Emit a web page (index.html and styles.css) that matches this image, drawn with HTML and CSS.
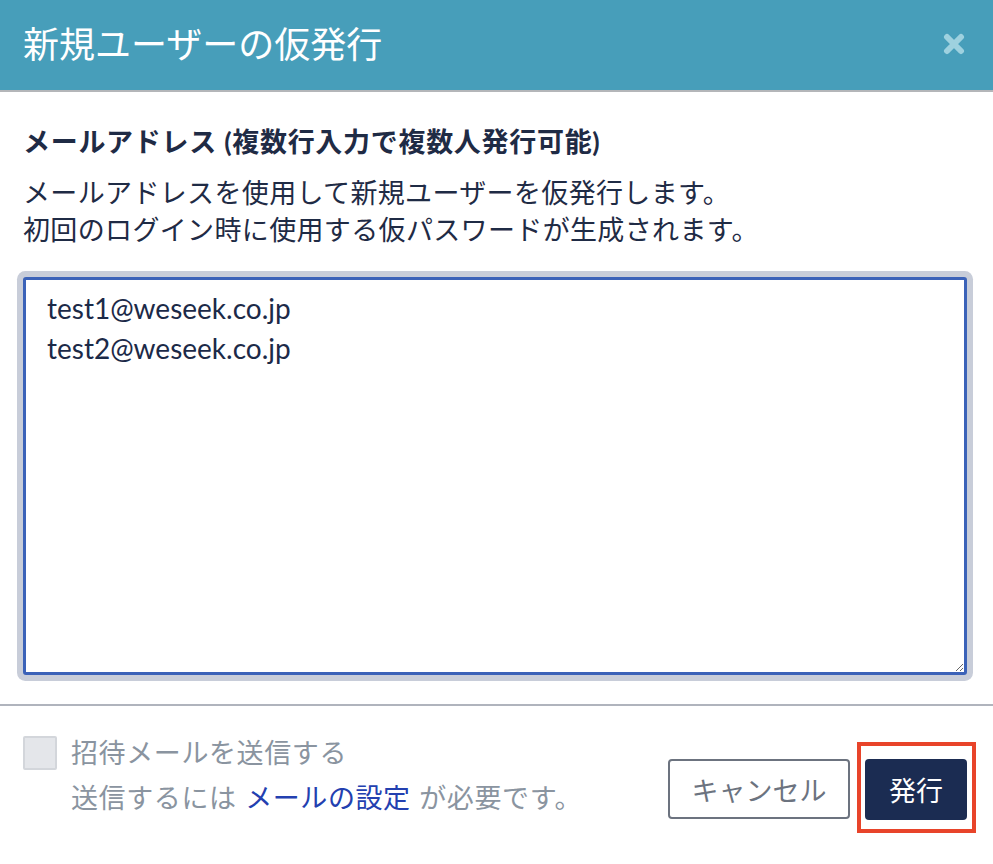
FILE: index.html
```html
<!DOCTYPE html>
<html lang="ja">
<head>
<meta charset="utf-8">
<link rel="stylesheet" href="styles.css">
</head>
<body>
<div class="modal">
  <header class="modal-header">
    <h1 class="modal-title">新規ユーザーの仮発行</h1>
    <button class="close" aria-label="close">
      <svg width="22" height="22" viewBox="0 0 22 22"><path d="M4 4 L18 18 M18 4 L4 18" stroke="#9ed1df" stroke-width="6" stroke-linecap="round"/></svg>
    </button>
  </header>
  <section class="modal-body">
    <label class="field-label">メールアドレス (複数行入力で複数人発行可能)</label>
    <p class="field-desc">メールアドレスを使用して新規ユーザーを仮発行します。<br>初回のログイン時に使用する仮パスワードが生成されます。</p>
    <textarea class="emails">test1@weseek.co.jp
test2@weseek.co.jp</textarea>
  </section>
  <footer class="modal-footer">
    <div class="send-mail">
      <div class="check-row">
        <span class="checkbox"></span>
        <span class="check-label">招待メールを送信する</span>
      </div>
      <p class="help">送信するには <a class="link" href="#">メールの設定</a> が必要です。</p>
    </div>
    <div class="actions">
      <button class="btn btn-outline">キャンセル</button>
      <span class="highlight"><button class="btn btn-primary">発行</button></span>
    </div>
  </footer>
</div>
</body>
</html>
```
FILE: styles.css
```css
* { box-sizing: border-box; }
html, body { margin: 0; padding: 0; background: #fff; }
body {
  font-family: Lato, "Noto Sans CJK JP", sans-serif;
  color: #1f2b45;
  width: 993px;
  height: 864px;
  overflow: hidden;
}
.modal { width: 993px; }
.modal-header {
  height: 92px;
  background: #479eba;
  border-bottom: 2px solid #b4b6b9;
  display: flex;
  align-items: center;
  justify-content: space-between;
  padding: 0 28px 0 23px;
}
.modal-title {
  margin: 0;
  font-size: 36px;
  font-weight: 400;
  color: #fff;
  line-height: 1;
  padding-bottom: 2px;
}
.close {
  border: 0;
  background: none;
  padding: 0;
  display: flex;
  margin-top: -2px;
}
.modal-body {
  padding: 32px 26px 29px 23px;
  border-bottom: 2px solid #b0b4bd;
}
.field-label {
  display: block;
  font-size: 27px;
  font-weight: 700;
  line-height: 36px;
  letter-spacing: 0.7px;
}
.field-desc {
  margin: 14px 0 29px;
  font-size: 27px;
  line-height: 37px;
  letter-spacing: 0.35px;
}
.emails {
  display: block;
  width: 944px;
  height: 398px;
  border: 3px solid #3b62b8;
  border-radius: 3px;
  box-shadow: 0 0 0 6px #c8cdd9;
  padding: 8px 21px;
  font-family: Lato, "Noto Sans CJK JP", sans-serif;
  font-size: 28px;
  line-height: 40px;
  color: #1c2a48;
  resize: vertical;
  outline: none;
}
.modal-footer {
  display: flex;
  justify-content: space-between;
  padding: 28px 17px 0 23px;
}
.check-row {
  display: flex;
  align-items: center;
  gap: 14px;
}
.checkbox {
  width: 34px;
  height: 34px;
  background: #e4e6ea;
  border: 2px solid #d3d6db;
  border-radius: 2px;
}
.check-label, .help {
  font-size: 27px;
  color: #8a94a0;
  line-height: 38px;
  letter-spacing: 0.6px;
}
.help {
  margin: 7px 0 0 48px;
  word-spacing: 1px;
}
.link { color: #2340b0; text-decoration: none; }
.actions {
  display: flex;
  align-items: flex-start;
  gap: 7px;
  padding-top: 8px;
}
.btn {
  font-family: Lato, "Noto Sans CJK JP", sans-serif;
  font-size: 27px;
  height: 60px;
  border-radius: 4px;
  cursor: pointer;
}
.btn-outline {
  margin-top: 17px;
  width: 182px;
  background: #fff;
  border: 2px solid #6c737f;
  color: #6c737f;
}
.btn-primary {
  width: 102px;
  background: #1b2c52;
  border: 0;
  color: #fff;
}
.highlight {
  display: block;
  border: 4px solid #e8442a;
  padding: 13px 5px 9px 4px;
}
.highlight .btn { display: block; height: 61px; }
```
